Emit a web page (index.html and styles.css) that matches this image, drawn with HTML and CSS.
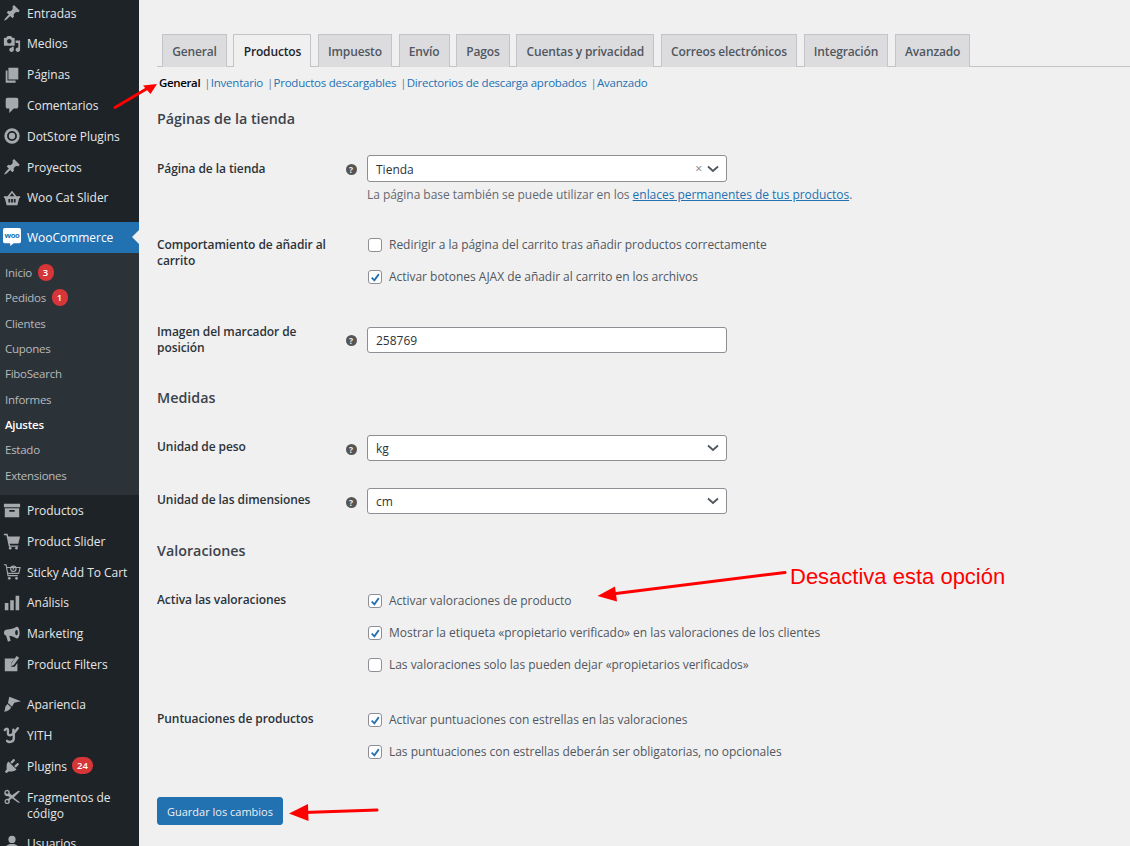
FILE: index.html
```html
<!DOCTYPE html>
<html lang="es">
<head>
<meta charset="utf-8">
<title>Ajustes de WooCommerce</title>
<link rel="stylesheet" href="styles.css">
</head>
<body>
<div class="page">
<nav class="sidebar">
  <ul class="menu">
    <li class="item"><svg class="ic" viewBox="0 0 20 20"><path d="M10.44 3.020l1.820-1.820 6.360 6.350-1.830 1.820c-1.050-.68-2.480-.57-3.410.36l-.75.75c-.92.93-1.040 2.350-.35 3.410l-1.830 1.820-2.410-2.410-2.800 2.790c-.42.42-3.380 2.710-3.800 2.290s1.860-3.390 2.280-3.810l2.790-2.790L4.100 9.360l1.830-1.820c1.050.69 2.480.57 3.400-.36l.75-.75c.93-.92 1.050-2.350.36-3.410z"/></svg><span>Entradas</span></li>
    <li class="item"><svg class="ic" viewBox="0 0 20 20"><path d="M13 11V4c0-.55-.45-1-1-1h-1.670L9 1H5L3.670 3H2c-.55 0-1 .45-1 1v7c0 .55.45 1 1 1h10c.55 0 1-.45 1-1zM7 4.500c1.380 0 2.500 1.120 2.500 2.500S8.380 9.500 7 9.500 4.500 8.380 4.500 7 5.620 4.500 7 4.500zM14 6h5v10.500c0 1.380-1.120 2.500-2.500 2.500S14 17.880 14 16.500s1.120-2.500 2.500-2.500c.17 0 .34.020.5.050V9h-3V6zm-4 8.050V13h2v3.500c0 1.380-1.120 2.500-2.500 2.500S7 17.880 7 16.500 8.120 14 9.500 14c.17 0 .34.020.5.050z"/></svg><span>Medios</span></li>
    <li class="item"><svg class="ic" viewBox="0 0 20 20"><path d="M6 15V2h11v13H6zm-1 1h9v2.500H3V5h2v11z"/></svg><span>Páginas</span></li>
    <li class="item"><svg class="ic" viewBox="0 0 20 20"><path d="M5 2h10c1.100 0 2 .9 2 2v8c0 1.100-.9 2-2 2h-3l-5 5v-5H5c-1.100 0-2-.9-2-2V4c0-1.100.9-2 2-2z"/></svg><span>Comentarios</span></li>
    <li class="item"><svg class="ic" viewBox="0 0 20 20"><path fill-rule="evenodd" d="M10 1.500a8.500 8.500 0 1 1 0 17 8.500 8.500 0 0 1 0-17zm0 3a5.500 5.500 0 1 0 0 11 5.500 5.500 0 0 0 0-11zm0 2a3.500 3.500 0 1 1 0 7 3.500 3.500 0 0 1 0-7z"/></svg><span>DotStore Plugins</span></li>
    <li class="item"><svg class="ic" viewBox="0 0 20 20"><path d="M10.44 3.020l1.820-1.820 6.360 6.350-1.830 1.820c-1.050-.68-2.480-.57-3.410.36l-.75.75c-.92.93-1.040 2.350-.35 3.410l-1.830 1.820-2.410-2.410-2.800 2.790c-.42.42-3.380 2.710-3.800 2.290s1.860-3.390 2.280-3.810l2.790-2.790L4.100 9.360l1.830-1.820c1.050.69 2.480.57 3.400-.36l.75-.75c.93-.92 1.050-2.350.36-3.410z"/></svg><span>Proyectos</span></li>
    <li class="item"><svg class="ic" viewBox="0 0 20 20"><path fill-rule="evenodd" d="M10 2l5 6h4v2h-1l-2 8H4l-2-8H1V8h4zm0 2.500L7.500 8h5zM6 11v4h2v-4zm3 0v4h2v-4zm3 0v4h2v-4z"/></svg><span>Woo Cat Slider</span></li>
    <li class="sep"></li>
    <li class="item current"><svg class="ic woo" viewBox="0 0 20 20"><path d="M2 0h16a2 2 0 0 1 2 2v13a2 2 0 0 1-2 2h-6l-4 3v-3H2a2 2 0 0 1-2-2V2a2 2 0 0 1 2-2z"/><text class="woo-mark" x="10" y="11" text-anchor="middle">woo</text></svg><span>WooCommerce</span></li>
    <li class="submenu">
      <ul class="sublist">
        <li class="subitem">Inicio <b class="badge">3</b></li>
        <li class="subitem">Pedidos <b class="badge">1</b></li>
        <li class="subitem">Clientes</li>
        <li class="subitem">Cupones</li>
        <li class="subitem">FiboSearch</li>
        <li class="subitem">Informes</li>
        <li class="subitem active">Ajustes</li>
        <li class="subitem">Estado</li>
        <li class="subitem">Extensiones</li>
      </ul>
    </li>
    <li class="item"><svg class="ic" viewBox="0 0 20 20"><path fill-rule="evenodd" d="M1 3h18v4H1zm1 5h16v10H2zm5 2v2h6v-2z"/></svg><span>Productos</span></li>
    <li class="item"><svg class="ic" viewBox="0 0 20 20"><path d="M1 2h4l1 3h13l-2 8H7.500l.5 2h9v1.500H6.500L3.800 3.500H1z"/><circle cx="8" cy="18" r="1.500"/><circle cx="15" cy="18" r="1.500"/></svg><span>Product Slider</span></li>
    <li class="item"><svg class="ic" viewBox="0 0 20 20"><path class="line" d="M1 2h2.500l2 12h11M4.500 5H19l-1.500 6.500H5.500"/><circle class="line" cx="11.500" cy="6.500" r="3"/><circle cx="11.500" cy="6.500" r="1"/><circle cx="7" cy="17" r="1.500"/><circle cx="15" cy="17" r="1.500"/></svg><span>Sticky Add To Cart</span></li>
    <li class="item"><svg class="ic" viewBox="0 0 20 20"><path d="M18 18V2h-4v16h4zm-6 0V7H8v11h4zm-6 0v-8H2v8h4z"/></svg><span>Análisis</span></li>
    <li class="item"><svg class="ic" viewBox="0 0 20 20"><path fill-rule="evenodd" d="M15 2a3 6.500 0 0 1 3.500 6.500A3 6.500 0 0 1 15 15c-3-2-6-3-8-3l1.500 5.500-3 1L3.500 12A4 4 0 0 1 1 8.500 4 4 0 0 1 5 5c3 0 7-1 10-3zm0 3.500a1.500 3 0 1 0 .01 0z"/></svg><span>Marketing</span></li>
    <li class="item"><svg class="ic" viewBox="0 0 20 20"><path d="M2 4h11l-4 5v4h4l3-4v9H2z"/><path d="M15 1l3 2-6 8-3 1.500.2-3z"/></svg><span>Product Filters</span></li>
    <li class="sep"></li>
    <li class="item"><svg class="ic" viewBox="0 0 20 20"><path d="M7 2l13 5-7.500 1.500L10 13 5.500 9zM5 10l4 3.500c-1 3-3.500 4.500-8 5 1.500-1.500 1-3.500 1.500-5C3 12 4 11 5 10z"/></svg><span>Apariencia</span></li>
    <li class="item"><svg class="ic" viewBox="0 0 20 20"><path class="thick" d="M2 4.500c1.500-2 3.500-2 3.500 0v4c0 2.500 4 2.500 6-.5V4M16.500 2.500L12 8v5.500c0 4-5 5.500-7.500 3"/></svg><span>YITH</span></li>
    <li class="item has-badge"><svg class="ic" viewBox="0 0 20 20"><path d="M13.110 4.360L9.870 7.600 8 5.730l3.240-3.240c.35-.34 1.050-.2 1.560.32.52.51.66 1.210.31 1.550zm-8 1.770l.91-1.120 9.010 9.010-1.190.84c-.71.710-2.630 1.160-3.820 1.160H6.140L4.900 17.260c-.59.590-1.540.590-2.120 0-.59-.58-.59-1.530 0-2.120l1.240-1.240v-3.880c0-1.130.4-3.190 1.090-3.890zm7.260 3.970l3.240-3.240c.34-.35 1.040-.21 1.550.31.52.51.66 1.210.31 1.550l-3.240 3.250z"/></svg><span>Plugins</span><b class="badge wide">24</b></li>
    <li class="item two-line"><svg class="ic" viewBox="0 0 20 20"><path fill-rule="evenodd" d="M4.500 2a3 3 0 0 1 2.900 3.800L10 8l7-5 2 .5L12 10.500l7 5.500-2 .5-7-5-2.600 2.200A3 3 0 1 1 5.500 12l2-1.500-2-1.500A3 3 0 1 1 4.500 2zm0 1.500a1.500 1.500 0 1 0 0 3 1.500 1.500 0 0 0 0-3zm0 10a1.500 1.500 0 1 0 0 3 1.500 1.500 0 0 0 0-3z"/></svg><span>Fragmentos de código</span></li>
    <li class="item"><svg class="ic" viewBox="0 0 20 20"><circle cx="10" cy="6" r="4"/><path d="M2 18c0-5 3-7 8-7s8 2 8 7z"/></svg><span>Usuarios</span></li>
  </ul>
</nav>

<main class="content">
  <div class="tabs">
    <a class="tab">General</a>
    <a class="tab on">Productos</a>
    <a class="tab">Impuesto</a>
    <a class="tab">Envío</a>
    <a class="tab">Pagos</a>
    <a class="tab">Cuentas y privacidad</a>
    <a class="tab">Correos electrónicos</a>
    <a class="tab">Integración</a>
    <a class="tab">Avanzado</a>
  </div>
  <div class="subsub">
    <a class="cur">General</a><i>|</i><a>Inventario</a><i>|</i><a>Productos descargables</a><i>|</i><a>Directorios de descarga aprobados</a><i>|</i><a>Avanzado</a>
  </div>

  <h2 class="h h-first">Páginas de la tienda</h2>
  <div class="row r-shop">
    <div class="lab lab-tall">Página de la tienda</div>
    <div class="help"><span class="q">?</span></div>
    <div class="field">
      <div class="sel"><span class="val">Tienda</span><span class="clear">×</span><svg class="chev" viewBox="0 0 12 8"><path d="M1 1.500l5 4.500 5-4.500"/></svg></div>
      <p class="desc">La página base también se puede utilizar en los <a>enlaces permanentes de tus productos</a>.</p>
    </div>
  </div>
  <div class="row r-cart">
    <div class="lab">Comportamiento de añadir al carrito</div>
    <div class="help"></div>
    <div class="field checks">
      <label class="chk"><span class="box"></span>Redirigir a la página del carrito tras añadir productos correctamente</label>
      <label class="chk"><span class="box"><svg viewBox="0 0 14 14"><path d="M3 7.500l3 3 5-7"/></svg></span>Activar botones AJAX de añadir al carrito en los archivos</label>
    </div>
  </div>
  <div class="row r-img">
    <div class="lab">Imagen del marcador de posición</div>
    <div class="help"><span class="q">?</span></div>
    <div class="field"><div class="sel"><span class="val">258769</span></div></div>
  </div>

  <h2 class="h h-med">Medidas</h2>
  <div class="row r-kg">
    <div class="lab lab-mid">Unidad de peso</div>
    <div class="help"><span class="q">?</span></div>
    <div class="field"><div class="sel low"><span class="val">kg</span><svg class="chev" viewBox="0 0 12 8"><path d="M1 1.500l5 4.500 5-4.500"/></svg></div></div>
  </div>
  <div class="row r-cm">
    <div class="lab lab-mid">Unidad de las dimensiones</div>
    <div class="help"><span class="q">?</span></div>
    <div class="field"><div class="sel low"><span class="val">cm</span><svg class="chev" viewBox="0 0 12 8"><path d="M1 1.500l5 4.500 5-4.500"/></svg></div></div>
  </div>

  <h2 class="h h-val">Valoraciones</h2>
  <div class="row r-act">
    <div class="lab up">Activa las valoraciones</div>
    <div class="help"></div>
    <div class="field checks">
      <label class="chk"><span class="box"><svg viewBox="0 0 14 14"><path d="M3 7.500l3 3 5-7"/></svg></span>Activar valoraciones de producto</label>
      <label class="chk"><span class="box"><svg viewBox="0 0 14 14"><path d="M3 7.500l3 3 5-7"/></svg></span>Mostrar la etiqueta «propietario verificado» en las valoraciones de los clientes</label>
      <label class="chk"><span class="box"></span>Las valoraciones solo las pueden dejar «propietarios verificados»</label>
    </div>
  </div>
  <div class="row r-pun">
    <div class="lab up">Puntuaciones de productos</div>
    <div class="help"></div>
    <div class="field checks">
      <label class="chk"><span class="box"><svg viewBox="0 0 14 14"><path d="M3 7.500l3 3 5-7"/></svg></span>Activar puntuaciones con estrellas en las valoraciones</label>
      <label class="chk"><span class="box"><svg viewBox="0 0 14 14"><path d="M3 7.500l3 3 5-7"/></svg></span>Las puntuaciones con estrellas deberán ser obligatorias, no opcionales</label>
    </div>
  </div>
  <button class="save" type="button">Guardar los cambios</button>
</main>

<svg class="marks" viewBox="0 0 1130 846">
  <path class="shaft" d="M115 107.500L148 88"/>
  <path class="head" d="M157 84L143 85.500 150.500 94z"/>
  <path class="shaft" d="M785 572.500L612 594"/>
  <path class="head" d="M597.500 596L615 586.500 617 601.500z"/>
  <path class="shaft" d="M377 810L304 812.500"/>
  <path class="head" d="M289 813.500L308 804 308.500 821z"/>
</svg>
<div class="note">Desactiva esta opción</div>
</div>
</body>
</html>
```
FILE: styles.css
```css
* { box-sizing: border-box; }
html, body { margin: 0; padding: 0; height: 846px; overflow: hidden; }
body { font-family: "Open Sans", "Noto Sans", sans-serif; font-size: 12px; color: #3c434a; background: #f0f0f1; }
.page { position: relative; display: flex; width: 1130px; height: 846px; overflow: hidden; }

/* sidebar */
.sidebar { flex: 0 0 139px; height: 846px; background: #1d2327; overflow: hidden; }
.menu, .sublist { list-style: none; margin: 0; padding: 0; }
.menu { margin-top: -2.4px; }
.item { position: relative; display: flex; align-items: center; height: 30.77px; color: #e6e6e8; font-size: 12px; line-height: 16px; letter-spacing: -0.03px; }
.item span { display: block; margin-top: 1.400px; }
.item.has-badge span { margin-top: 2.400px; }
.ic { flex: 0 0 18px; width: 18px; height: 18px; margin: 0 6.500px 0 2.500px; fill: #a7aaad; }
.ic .line { fill: none; stroke: #a7aaad; stroke-width: 1.200; }
.ic .thick { fill: none; stroke: #a7aaad; stroke-width: 2.600; stroke-linecap: round; }
.sep { height: 9px; }
.current { background: #2271b1; color: #fff; }
.current::after { content: ""; position: absolute; right: 0; top: 8px; border: 7.500px solid transparent; border-right-color: #f0f0f1; border-left-width: 0; }
.woo { fill: #fff; }
.woo .woo-mark { fill: #2271b1; font-family: "Open Sans", sans-serif; font-size: 8.500px; font-weight: 700; letter-spacing: -0.300px; }
.submenu { background: #2c3338; padding: 7.300px 0 7.400px; }
.subitem { display: flex; align-items: center; gap: 5.500px; height: 25.300px; padding-left: 5px; color: #b8babd; font-size: 11.500px; letter-spacing: -0.250px; }
.subitem.active { color: #fff; font-weight: 600; }
.badge { display: inline-block; min-width: 16px; height: 17px; padding: 0 5px; border-radius: 9px; background: #d63638; color: #fff; font-size: 9.500px; font-weight: 600; line-height: 17px; letter-spacing: 0; text-align: center; }
.wide { margin-left: 5px; }
.two-line { height: 46.800px; align-items: flex-start; padding-top: 7.500px; }
.two-line span { width: 100px; }

/* content */
.content { flex: 1 1 auto; padding: 34px 0 0 18px; min-width: 0; }
.tabs { display: flex; gap: 6.500px; height: 33px; padding-left: 5px; border-bottom: 1px solid #c3c4c7; }
.tab { display: block; height: 33px; padding: 0 9.200px; border: 1px solid #c3c4c7; border-bottom: 0; background: #dcdcde; color: #50575e; font-size: 12px; font-weight: 600; line-height: 33px; letter-spacing: -0.150px; white-space: nowrap; }
.tab.on { margin-bottom: -1px; background: #f0f0f1; color: #1d2327; }
.subsub { display: flex; margin: 8px 0 0 2px; font-size: 11.500px; line-height: 16px; letter-spacing: -0.230px; color: #2271b1; }
.subsub .cur { color: #000; font-weight: 600; letter-spacing: -0.350px; }
.subsub i { margin: 0 0.400px 0 4px; font-style: normal; color: #787c82; }
.h { margin: 0; font-size: 14.300px; font-weight: 600; line-height: 20px; color: #3c434a; }
.h-first { margin-top: 18px; }
.h-med { margin-top: 32px; }
.h-val { margin-top: 27px; }
.row { display: grid; grid-template-columns: 188px 22px 360px; font-size: 12px; line-height: 16px; }
.lab { color: #2c3338; font-weight: 600; width: 178px; letter-spacing: -0.080px; }
.lab-tall { line-height: 27px; }
.lab-mid { line-height: 26px; margin-top: -1px; }
.up { margin-top: -1px; }
.help { display: flex; justify-content: center; padding-right: 10px; }
.q { display: block; width: 11px; height: 11px; margin-top: 9px; border-radius: 50%; background: #555; color: #f0f0f1; font-size: 8.500px; font-weight: 700; line-height: 11px; text-align: center; }
.r-shop { margin-top: 26px; }
.r-cart { margin-top: 34px; }
.r-img { margin-top: 39px; align-items: center; }
.r-img .q { margin-top: 0; }
.r-kg { margin-top: 27px; }
.r-cm { margin-top: 27px; }
.r-act { margin-top: 32px; }
.r-pun { margin-top: 39px; }
.sel { display: flex; align-items: center; height: 27px; padding: 0 8px; border: 1px solid #8c8f94; border-radius: 3px; background: #fff; color: #2c3338; font-size: 12px; }
.r-img .sel, .low { height: 26px; }
.val { flex: 1; padding-top: 2px; }
.clear { margin-right: 5px; padding-top: 1px; color: #787c82; font-size: 12px; }
.chev { width: 12px; height: 8px; margin-right: -1px; fill: none; stroke: #50575e; stroke-width: 1.800; }
.desc { margin: 5px 0 0; font-size: 12px; line-height: 16px; letter-spacing: -0.040px; color: #646970; white-space: nowrap; }
.desc a { color: #2271b1; text-decoration: underline; }
.checks { display: flex; flex-direction: column; gap: 16px; }
.chk { display: flex; align-items: center; gap: 7px; height: 16px; color: #50575e; font-size: 12px; letter-spacing: -0.030px; white-space: nowrap; }
.box { display: block; flex: 0 0 14.500px; width: 14.500px; height: 14.500px; margin-left: 0.500px; border: 1px solid #8c8f94; border-radius: 3px; background: #fff; }
.box svg { display: block; width: 12.500px; height: 12.500px; fill: none; stroke: #2271b1; stroke-width: 2; }
.save { display: block; width: 126px; height: 28px; margin-top: 37px; padding: 0; border: 1px solid #2271b1; border-radius: 3px; background: #2271b1; color: #f0f0f1; font-family: inherit; font-size: 11px; }

/* annotations over the screenshot */
.marks { position: absolute; left: 0; top: 0; width: 1130px; height: 846px; pointer-events: none; }
.shaft { fill: none; stroke: #f00; stroke-width: 3; stroke-linecap: round; }
.head { fill: #f00; }
.note { position: absolute; left: 790px; top: 564px; font-family: "Liberation Sans", Arial, sans-serif; font-size: 22px; line-height: 25px; color: #f00; white-space: nowrap; }
```
